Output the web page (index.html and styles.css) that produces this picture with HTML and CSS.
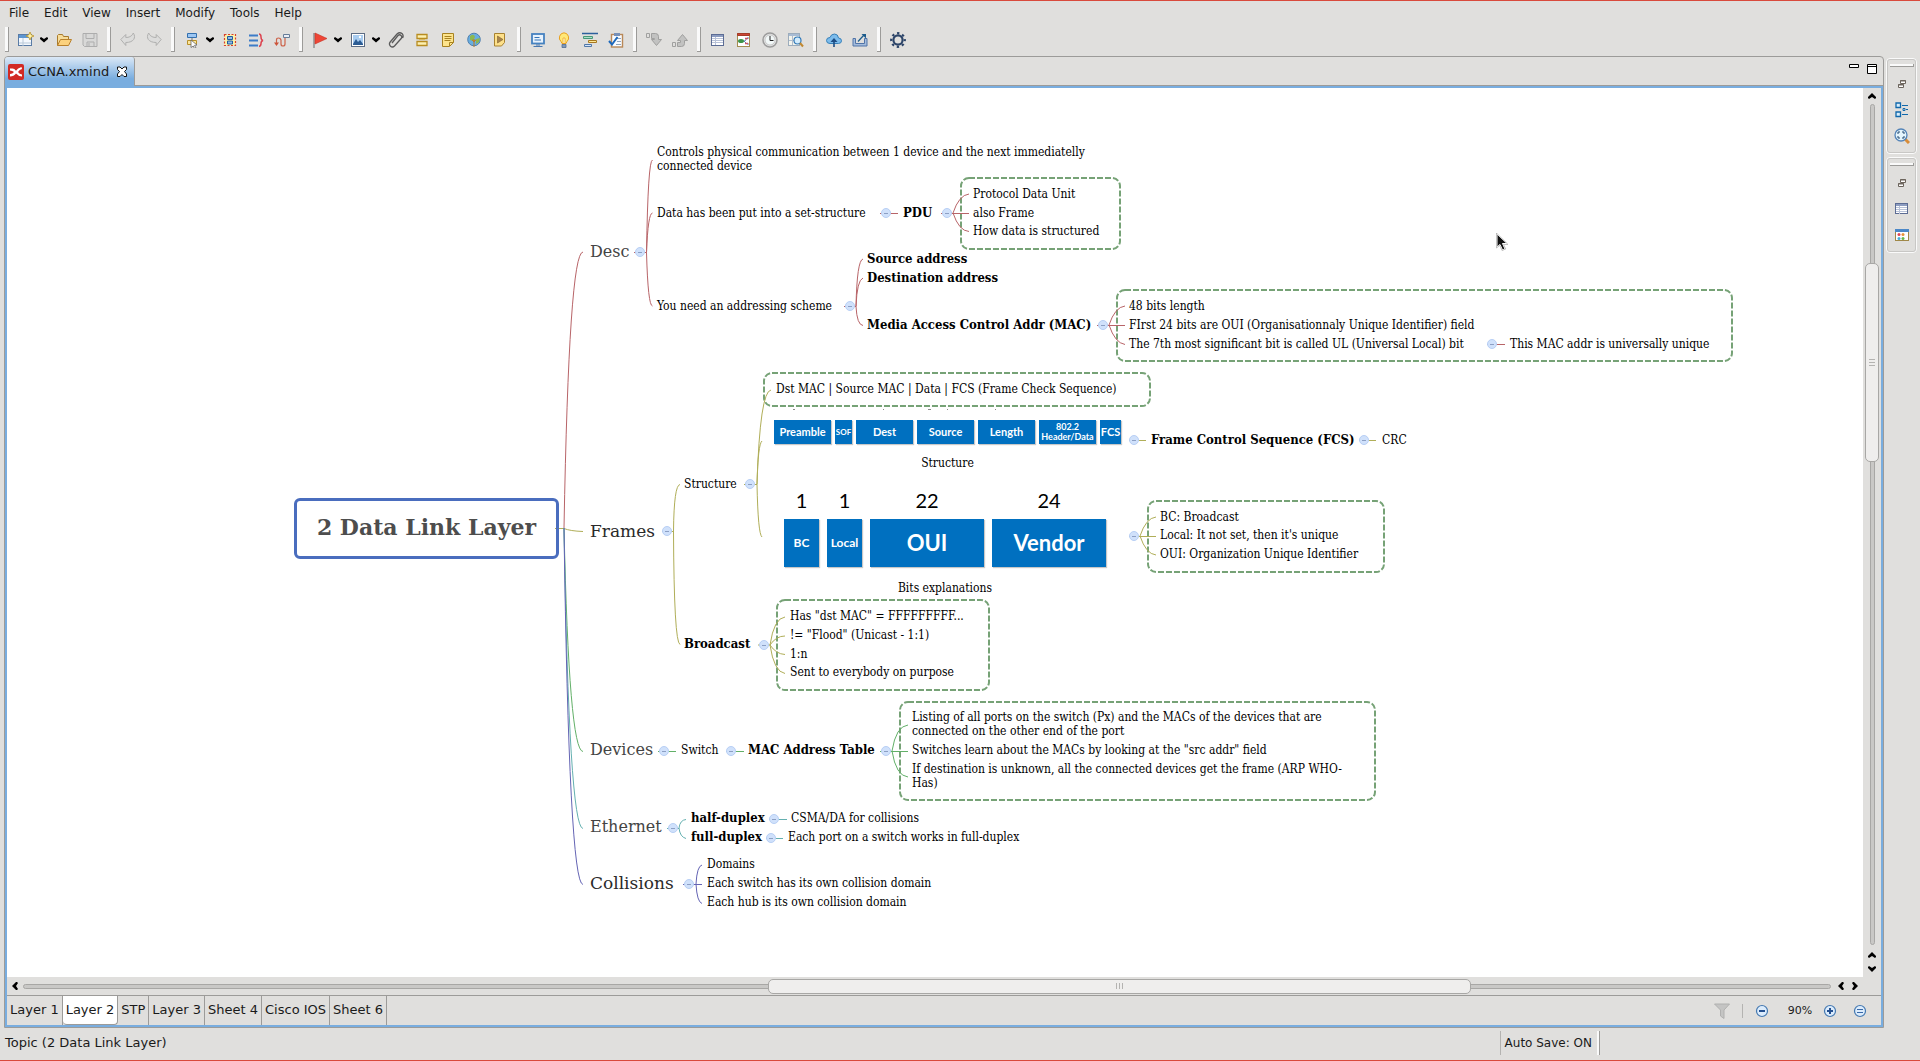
FILE: index.html
```html
<!DOCTYPE html>
<html lang="en">
<head>
<meta charset="utf-8">
<title>CCNA.xmind</title>
<link rel="stylesheet" href="styles.css">
</head>
<body>
<nav class="menubar" aria-label="Main menu">
  <button>File</button><button>Edit</button><button>View</button><button>Insert</button><button>Modify</button><button>Tools</button><button>Help</button>
</nav>

<div class="toolbar" role="toolbar" aria-label="Main toolbar">
  <i class="sep"></i>
  <button aria-label="New"><svg viewBox="0 0 16 16"><rect x=".5" y="2.500" width="13" height="11" fill="#f4f8fd" stroke="#5a7ca6"/><path d="M1 3h12v3H1z" fill="#5d96d2"/><path d="M5 6v8M1 11h12" stroke="#b8c8d8"/><path d="M12 0l1.200 2.800L16 4l-2.800 1.200L12 8l-1.200-2.800L8 4l2.800-1.200z" fill="#fff3a8" stroke="#b8902a" stroke-width=".8"/></svg></button>
  <button class="drop" aria-label="New options"><svg viewBox="0 0 8 6"><path d="M0 1l1-1 3 2 3-2 1 1v1L4 5.500 0 2z"/></svg></button>
  <button aria-label="Open"><svg viewBox="0 0 16 16"><path d="M1.500 13.500v-10l1-1h4l1 2h5v3" fill="#f7dc9a" stroke="#a87b2c"/><path d="M1.500 13.500l3-6h11l-3 6z" fill="#fbd17d" stroke="#b8802c"/></svg></button>
  <button aria-label="Save"><svg viewBox="0 0 16 16" fill="#d8d8d7" stroke="#adadad"><path d="M1 1.500h14v13H2.500L1 13z"/><path d="M4 1.500h8v5H4zM5 10h7v4.500H5zM7 11v3.500"/></svg></button>
  <i class="sep"></i>
  <button aria-label="Undo"><svg viewBox="0 0 16 16"><path d="M.8 7.500l5-5v3c3 0 6-1 7.500-4.500 3 4.500.5 9.500-7.500 9.500v3z" fill="#dcdcdb" stroke="#b0b0af"/></svg></button>
  <button aria-label="Redo"><svg viewBox="0 0 16 16"><path d="M15.200 7.500l-5-5v3c-3 0-6-1-7.500-4.500-3 4.500-.5 9.500 7.500 9.500v3z" fill="#dcdcdb" stroke="#b0b0af"/></svg></button>
  <i class="sep"></i>
  <button aria-label="Topic"><svg viewBox="0 0 16 16"><path d="M3.500 1.500h9v4h-9z" fill="#9cc6f2" stroke="#3470ae"/><path d="M8 6v2" stroke="#777"/><path d="M3.500 8.500h9v4h-9z" fill="#fbe59a" stroke="#b8902a"/><path d="M7 8l6 5-2.500.3L12 16l-1.500.5L9.300 14 7 15.500z" fill="#fff" stroke="#666" stroke-width=".8"/></svg></button>
  <button class="drop" aria-label="Topic options"><svg viewBox="0 0 8 6"><path d="M0 1l1-1 3 2 3-2 1 1v1L4 5.500 0 2z"/></svg></button>
  <button aria-label="Boundary"><svg viewBox="0 0 16 16"><rect x="2.500" y="2.500" width="11" height="11" fill="#fff2a8" stroke="#d8402c" stroke-dasharray="2 1.500" stroke-width="1.200"/><path d="M5.500 4.500h5v3h-5zM5.500 9h5v3h-5z" fill="#8cb8e8" stroke="#205c9c"/></svg></button>
  <button aria-label="Summary"><svg viewBox="0 0 16 16" fill="none"><path d="M1 3.500h9M1 8.500h9M1 13.500h9" stroke="#3c7cc8" stroke-width="2"/><path d="M11 2q2 0 2 3t2 3.500q-2 .5-2 3t-2 3" stroke="#dc4450" stroke-width="1.500"/></svg></button>
  <button aria-label="Relationship"><svg viewBox="0 0 16 16" fill="none"><path d="M2.500 12V8q0-2 2-2t2.500 2v4q0 2 2 2t2-2V5" stroke="#cc6248" stroke-width="1.200"/><path d="M0 10.500h5L2.500 14z" fill="#cc5238"/><path d="M9.500 2.500h6v3h-6z" stroke="#667c98" fill="#e8eef6"/></svg></button>
  <i class="sep"></i>
  <button aria-label="Marker"><svg viewBox="0 0 16 16"><path d="M2 1v15" stroke="#909090" stroke-width="1.500"/><path d="M3 1l12 5.500L3 12z" fill="#ee4636" stroke="#c83024" stroke-width=".6"/></svg></button>
  <button class="drop" aria-label="Marker options"><svg viewBox="0 0 8 6"><path d="M0 1l1-1 3 2 3-2 1 1v1L4 5.500 0 2z"/></svg></button>
  <button aria-label="Image"><svg viewBox="0 0 16 16"><rect x="1.500" y="1.500" width="13" height="13" fill="#fff" stroke="#5c6c84"/><path d="M3 3h10v10H3z" fill="#a8ccf0"/><path d="M3 12l3-5 2 3 2-2 3 4v1H3z" fill="#2c5c94"/><circle cx="10" cy="5" r="1.200" fill="#fff"/></svg></button>
  <button class="drop" aria-label="Image options"><svg viewBox="0 0 8 6"><path d="M0 1l1-1 3 2 3-2 1 1v1L4 5.500 0 2z"/></svg></button>
  <button aria-label="Attachment"><svg viewBox="0 0 16 16" fill="none"><path d="M4 11l6-7.500q1.500-1.500 3 0t.2 3L6.500 14q-2 2-4 .2t-.3-4.200L9 2q2.500-2.300 5-.5 2 2 .5 4.500" stroke="#5a5a5a" stroke-width="1.300"/></svg></button>
  <button aria-label="Label"><svg viewBox="0 0 16 16"><path d="M3 2.500h10v4H3zM3 9.500h10v4H3z" fill="#fdf0b0" stroke="#b88c20" stroke-width="1.300"/><path d="M5 7.500h6" stroke="#d8b860"/></svg></button>
  <button aria-label="Notes"><svg viewBox="0 0 16 16"><path d="M2.500 1.500h11v9l-4 4h-7z" fill="#fde48c" stroke="#a88220"/><path d="M4.500 4.500h7M4.500 6.500h7M4.500 8.500h6M9.500 14v-3.500h4" stroke="#a88220" fill="none"/></svg></button>
  <button aria-label="Hyperlink"><svg viewBox="0 0 16 16"><circle cx="8" cy="7.500" r="6.300" fill="#68aee0" stroke="#5080b0"/><path d="M4 4q4-3 5 1L7 9 4 8zM10 7l4-1-1 4-3 2z" fill="#8cb850"/><path d="M8 15V10l-1.500-2h3L8 10" stroke="#b87828" fill="#e8a030"/></svg></button>
  <button aria-label="Audio notes"><svg viewBox="0 0 16 16"><path d="M2.500 1.500h10v9l-3 3.500h-7z" fill="#fde08a" stroke="#a88230"/><path d="M5.500 4v7l5.500-3.500z" fill="#a8844c" stroke="#806030" stroke-width=".6"/></svg></button>
  <i class="sep"></i>
  <button aria-label="Presentation"><svg viewBox="0 0 16 16"><rect x="2" y="2" width="12" height="9.500" fill="#e8f2fc" stroke="#4682c0" stroke-width="1.800"/><path d="M4.500 5.500h5M4.500 8h6.500" stroke="#3474b8"/><path d="M6 13h4M3.500 14.500h9" stroke="#4878b0"/></svg></button>
  <button aria-label="Brainstorming"><svg viewBox="0 0 16 16"><path d="M8 .8a5 5 0 0 1 3 8.700L10 11.500H6L5 9.500A5 5 0 0 1 8 .8z" fill="#ffe878" stroke="#e8a020"/><path d="M7 11V6h2v5" stroke="#f0a828" fill="#fffbe0" stroke-width=".8"/><path d="M6 12.500h4v3H6z" fill="#8098b8" stroke="#506c90" stroke-width=".8"/></svg></button>
  <button aria-label="Gantt"><svg viewBox="0 0 16 16"><path d="M0 1.500h16" stroke="#2c609c" stroke-width="1.500"/><path d="M1.500 4.500h9v2h-9z" fill="#a8e0c8" stroke="#489878"/><path d="M6.500 8.500h8v2h-8z" fill="#fce898" stroke="#a87820"/><path d="M2.500 12.500h7v2h-7z" fill="#d4e4fc" stroke="#5078a8"/></svg></button>
  <button aria-label="Task info"><svg viewBox="0 0 16 16"><rect x="3.500" y="2.500" width="11" height="12.500" fill="#f8fbff" stroke="#b88858" stroke-width="1.400"/><path d="M6 1h6v3H6z" fill="#7890b8"/><path d="M9 6.500h4M9 9.500h4M8 12.500h5" stroke="#90a4bc"/><path d="M1 9l3 3.500L9.500 5" fill="none" stroke="#1c68bc" stroke-width="2"/></svg></button>
  <i class="sep"></i>
  <button aria-label="Drill down"><svg viewBox="0 0 16 16" fill="#c2c2c1" stroke="#a0a09f"><path d="M.5 1.500h3v4h-3z" fill="none"/><path d="M5.500 1.500h4q3 0 3 3v3h3l-5 6-5-6h3V6.500h-3z"/></svg></button>
  <button aria-label="Drill up"><svg viewBox="0 0 16 16" fill="#c2c2c1" stroke="#a0a09f"><path d="M.5 10.500h3v4h-3z" fill="none"/><path d="M5.500 14.500h4q3 0 3-3v-3h3l-5-6-5 6h3v2h-3z"/></svg></button>
  <i class="sep"></i>
  <button aria-label="Properties"><svg viewBox="0 0 16 16"><rect x="1.500" y="2.500" width="12" height="11" fill="#fff" stroke="#5c6c94"/><path d="M2 3h11v2H2z" fill="#8c9cc0"/><path d="M2 6.500h11M2 8.500h11M2 10.500h11M5.500 5v8" stroke="#b8c2d8"/></svg></button>
  <button aria-label="Map theme"><svg viewBox="0 0 16 16"><rect x="1.500" y="1.500" width="12" height="13" fill="#fff" stroke="#a48c50"/><path d="M1.500 1.500h12v2h-12z" fill="#cc4434" stroke="#a43c28"/><path d="M6 9h3l2-3h2M8 9l3 3h2" stroke="#607cb8" fill="none"/><path d="M9 6.500h3M9 11.500h3" stroke="#cc5864" stroke-width="1.500"/><ellipse cx="5" cy="9" rx="3" ry="2" fill="#3c9448"/></svg></button>
  <button aria-label="Revisions"><svg viewBox="0 0 16 16"><circle cx="8" cy="8" r="7" fill="#e4e4e4" stroke="#9c9c9c" stroke-width="1.500"/><circle cx="8" cy="8" r="5" fill="#f2f8f8" stroke="#b8b8b8" stroke-width=".7"/><path d="M8 4v4.500h3.500" stroke="#222" fill="none"/></svg></button>
  <button aria-label="Search"><svg viewBox="0 0 16 16"><rect x=".5" y="1.500" width="11" height="12" fill="#f4f4ec" stroke="#9cacbc"/><path d="M1 2h10v2H1z" fill="#a8bcd4"/><path d="M4.500 4v9M1 8.500h7" stroke="#b0bccc"/><circle cx="9.500" cy="8.500" r="3.500" fill="#d4ecfc" stroke="#3078b8" stroke-width="1.200"/><path d="M12 11l3 3.500" stroke="#c08830" stroke-width="2"/></svg></button>
  <i class="sep"></i>
  <button aria-label="Upload"><svg viewBox="0 0 16 16"><path d="M4 11.500Q.5 11.500.5 8.500T4 5.500Q5 2 8.500 2t4 4q3 .2 3 2.800t-3 2.700z" fill="#7cbcec" stroke="#3880b8"/><path d="M8 15V9" stroke="#1c4c84" stroke-width="1.600"/><path d="M4.500 10L8 6l3.500 4z" fill="#1c4c84"/></svg></button>
  <button aria-label="Share"><svg viewBox="0 0 16 16"><path d="M1 6.500v7.500h14V6.500h-2.500v5h-9v-5z" fill="#a4bcdc" stroke="#5074a8"/><path d="M6 9.500L12 3" stroke="#1c5c8c" stroke-width="1.200"/><path d="M9.500 2H14v4.500z" fill="#1c5c8c"/></svg></button>
  <i class="sep"></i>
  <button aria-label="Preferences"><svg viewBox="0 0 16 16" fill="none" stroke="#2c4468"><circle cx="8" cy="8" r="4.600" stroke-width="2.200"/><circle cx="8" cy="8" r="6.800" stroke-width="2.200" stroke-dasharray="2.400 2.940" stroke-dashoffset="1.200"/></svg></button>
</div>

<div class="workbench">
  <main class="editor">
    <header class="editor-tabs">
      <div class="editor-tab">
        <svg viewBox="0 0 16 16" width="16" height="16"><rect width="16" height="16" rx="2" fill="#d22a24"/><path d="M2 4.500h2.500q2 0 3.500 2.300Q9.500 4 13.500 3l.5 2q-2.500.5-4 3 1.500 2 4 2.500v2q-4-.5-6-3-2 3-6 3v-2.500q2.500 0 4-2Q4.500 6.500 2 6.500z" fill="#fff"/></svg>
        <span>CCNA.xmind</span>
        <button class="close" aria-label="Close tab"><svg viewBox="0 0 12 12" width="12" height="12"><path d="M1.500 1h2.500l2 2 2-2h2.500v2.500L8.500 5.500l2 2.500v2.500H8l-2-2-2 2H1.500V8l2-2.500-2-2z" fill="#fff" stroke="#111"/></svg></button>
      </div>
      <div class="window-buttons">
        <button aria-label="Minimize"><svg viewBox="0 0 10 10" width="10" height="10"><path d="M.5.500h9v3h-9z" fill="#fff" stroke="#000"/></svg></button>
        <button aria-label="Maximize"><svg viewBox="0 0 10 10" width="10" height="10"><path d="M.5.500h9v9h-9zM0 2.500h10" fill="#fff" stroke="#000"/></svg></button>
      </div>
    </header>

    <div class="sheet">
      <section class="canvas" aria-label="Mind map">
        <svg class="links" aria-hidden="true">
          <g transform="translate(-7 -88)">
            <g class="boundary">
              <rect x="961" y="178" width="159" height="71" rx="8"/>
              <rect x="1117" y="290" width="615" height="71" rx="8"/>
              <rect x="764" y="373" width="386" height="33" rx="8"/>
              <rect x="1148" y="501" width="236" height="71" rx="8"/>
              <rect x="777" y="600" width="212" height="90" rx="8"/>
              <rect x="900" y="702" width="475" height="98" rx="8"/>
            </g>
            <g class="c-desc">
              <path d="M564 528Q569 252 583 252M634 252.500H646.500M646.500 252.500Q648 160 652.500 160M646.500 252.500Q648 213 652.500 213M646.500 252.500Q648 306 652.500 306"/>
              <path d="M880 213.500H898M941 213.500H969M953 213Q959 195 969 194M953 213Q959 231 969 231.500"/>
              <path d="M844 306.500H856M856 306.500Q857 260 863 259M856 306.500Q857 280 863 278M856 306.500Q857 325 863 325.500"/>
              <path d="M1097 325.500H1125M1109 325Q1115 307 1125 306M1109 325Q1115 343 1125 344.500M1487 344.500H1505"/>
            </g>
            <g class="c-frames">
              <path d="M555 528.500H564Q570 531 583 531.500M662 531.500H673.500M673.500 531Q674 485 680 484.500M673.500 531Q674 642 680 644.500"/>
              <path d="M744 484.500H757M757 484Q760 391 771 390M757 484Q758 444 762 441M757 484Q758 534 762 537"/>
              <path d="M1129 440.500H1146M1359 440.500H1376M1129 536.500H1156M1140 536Q1146 518 1156 517M1140 536Q1146 554 1156 555"/>
              <path d="M758 645H770M770 645Q774 618 785 617M770 645Q776 636 785 636M770 645Q776 654 785 654.500M770 645Q774 672 785 673.500"/>
            </g>
            <path class="specks" d="M793 409.500h2M883 409.500h1M928 409.500h3M947 409.500h1M995 409.500h1"/>
            <g class="c-devices">
              <path d="M564 528Q569 751 583 751.500M658 751.500H676M726 751.500H744M880 751.500H908M892 751Q896 726 908 725M892 751Q896 776 908 777"/>
            </g>
            <g class="c-ethernet">
              <path d="M564 528Q569 828 583 828.500M667 828.500H679M679 828Q680 820 686 819.500M679 828Q680 837 686 838.500M769 819.500H787M766 838.500H783"/>
            </g>
            <g class="c-collisions">
              <path d="M564 528Q569 884 583 884.500M683 884.500H702M696 884Q697 866 702 865M696 884Q697 902 702 903.500"/>
            </g>
          </g>
        </svg>

        <h1 class="central" style="left:287px;top:410px">2 Data Link Layer</h1>

        <div class="topic main" style="left:583px;top:154px">Desc</div>
        <div class="topic main strong" style="left:583px;top:433px">Frames</div>
        <div class="topic main" style="left:583px;top:652px">Devices</div>
        <div class="topic main" style="left:583px;top:729px">Ethernet</div>
        <div class="topic main strong" style="left:583px;top:785px">Collisions</div>

        <div class="topic" style="left:650px;top:57px">Controls physical communication between 1 device and the next immediatelly<br>connected device</div>
        <div class="topic" style="left:650px;top:118px">Data has been put into a set-structure</div>
        <div class="topic bold" style="left:896px;top:118px">PDU</div>
        <div class="topic" style="left:966px;top:99px">Protocol Data Unit</div>
        <div class="topic" style="left:966px;top:118px">also Frame</div>
        <div class="topic" style="left:966px;top:136px">How data is structured</div>
        <div class="topic" style="left:650px;top:211px">You need an addressing scheme</div>
        <div class="topic bold" style="left:860px;top:164px">Source address</div>
        <div class="topic bold" style="left:860px;top:183px">Destination address</div>
        <div class="topic bold" style="left:860px;top:230px">Media Access Control Addr (MAC)</div>
        <div class="topic" style="left:1122px;top:211px">48 bits length</div>
        <div class="topic" style="left:1122px;top:230px">FIrst 24 bits are OUI (Organisationnaly Unique Identifier) field</div>
        <div class="topic" style="left:1122px;top:249px">The 7th most significant bit is called UL (Universal Local) bit</div>
        <div class="topic" style="left:1503px;top:249px">This MAC addr is universally unique</div>

        <div class="topic" style="left:677px;top:389px">Structure</div>
        <div class="topic" style="left:769px;top:294px">Dst MAC | Source MAC | Data | FCS (Frame Check Sequence)</div>
        <figure class="frame-fields" style="left:767px;top:332px">
          <div class="fields"><span>Preamble</span><span class="tiny">SOF</span><span>Dest</span><span>Source</span><span>Length</span><span class="small">802.2<br>Header/Data</span><span>FCS</span></div>
          <figcaption>Structure</figcaption>
        </figure>
        <div class="topic bold" style="left:1144px;top:345px">Frame Control Sequence (FCS)</div>
        <div class="topic" style="left:1375px;top:345px">CRC</div>
        <figure class="mac-bits" style="left:777px;top:398px">
          <div class="counts"><span>1</span><span>1</span><span>22</span><span>24</span></div>
          <div class="fields"><span>BC</span><span>Local</span><span class="large">OUI</span><span class="large">Vendor</span></div>
          <figcaption>Bits explanations</figcaption>
        </figure>
        <div class="topic" style="left:1153px;top:422px">BC: Broadcast</div>
        <div class="topic" style="left:1153px;top:440px">Local: It not set, then it's unique</div>
        <div class="topic" style="left:1153px;top:459px">OUI: Organization Unique Identifier</div>

        <div class="topic bold" style="left:677px;top:549px">Broadcast</div>
        <div class="topic" style="left:783px;top:521px">Has "dst MAC" = FFFFFFFFF...</div>
        <div class="topic" style="left:783px;top:540px">!= "Flood" (Unicast - 1:1)</div>
        <div class="topic" style="left:783px;top:559px">1:n</div>
        <div class="topic" style="left:783px;top:577px">Sent to everybody on purpose</div>

        <div class="topic" style="left:674px;top:655px">Switch</div>
        <div class="topic bold" style="left:741px;top:655px">MAC Address Table</div>
        <div class="topic" style="left:905px;top:622px">Listing of all ports on the switch (Px) and the MACs of the devices that are<br>connected on the other end of the port</div>
        <div class="topic" style="left:905px;top:655px">Switches learn about the MACs by looking at the "src addr" field</div>
        <div class="topic" style="left:905px;top:674px">If destination is unknown, all the connected devices get the frame (ARP WHO-<br>Has)</div>

        <div class="topic bold" style="left:684px;top:723px">half-duplex</div>
        <div class="topic" style="left:784px;top:723px">CSMA/DA for collisions</div>
        <div class="topic bold" style="left:684px;top:742px">full-duplex</div>
        <div class="topic" style="left:781px;top:742px">Each port on a switch works in full-duplex</div>

        <div class="topic" style="left:700px;top:769px">Domains</div>
        <div class="topic" style="left:700px;top:788px">Each switch has its own collision domain</div>
        <div class="topic" style="left:700px;top:807px">Each hub is its own collision domain</div>

        <button class="toggle" style="left:628px;top:159px" aria-label="Collapse Desc"></button>
        <button class="toggle" style="left:874px;top:120px" aria-label="Collapse Data"></button>
        <button class="toggle" style="left:935px;top:120px" aria-label="Collapse PDU"></button>
        <button class="toggle" style="left:838px;top:213px" aria-label="Collapse addressing scheme"></button>
        <button class="toggle" style="left:1091px;top:232px" aria-label="Collapse MAC"></button>
        <button class="toggle" style="left:1480px;top:251px" aria-label="Collapse UL bit"></button>
        <button class="toggle" style="left:655px;top:438px" aria-label="Collapse Frames"></button>
        <button class="toggle" style="left:738px;top:391px" aria-label="Collapse Structure"></button>
        <button class="toggle" style="left:1122px;top:347px" aria-label="Collapse frame fields"></button>
        <button class="toggle" style="left:1352px;top:347px" aria-label="Collapse FCS"></button>
        <button class="toggle" style="left:1122px;top:443px" aria-label="Collapse bits"></button>
        <button class="toggle" style="left:752px;top:552px" aria-label="Collapse Broadcast"></button>
        <button class="toggle" style="left:652px;top:658px" aria-label="Collapse Devices"></button>
        <button class="toggle" style="left:719px;top:658px" aria-label="Collapse Switch"></button>
        <button class="toggle" style="left:874px;top:658px" aria-label="Collapse MAC Address Table"></button>
        <button class="toggle" style="left:661px;top:735px" aria-label="Collapse Ethernet"></button>
        <button class="toggle" style="left:762px;top:726px" aria-label="Collapse half-duplex"></button>
        <button class="toggle" style="left:759px;top:745px" aria-label="Collapse full-duplex"></button>
        <button class="toggle" style="left:677px;top:791px" aria-label="Collapse Collisions"></button>

        <svg class="pointer" viewBox="0 0 12 18" width="12" height="18" aria-hidden="true"><path d="M1 1v13l3-2.500 2.500 5.500 2.500-1-2.500-5.500H11z" fill="#111" stroke="#fff"/><path d="M.5 0v15l3.300-2.700L6 17.500l3.800-1.500L7.500 11.500H12z" fill="none" stroke="#888" stroke-width=".5"/></svg>
      </section>

      <div class="scroll vertical">
        <button aria-label="Scroll up"><svg viewBox="0 0 8 6"><path d="M0 4l4-4 4 4v1L7 6 4 4 1 6 0 5z"/></svg></button>
        <div class="track"><div class="thumb"></div></div>
        <button aria-label="Scroll up"><svg viewBox="0 0 8 6"><path d="M0 4l4-4 4 4v1L7 6 4 4 1 6 0 5z"/></svg></button>
        <button aria-label="Scroll down"><svg viewBox="0 0 8 6"><path d="M0 1l1-1 3 2 3-2 1 1v1L4 6 0 2z"/></svg></button>
      </div>

      <div class="scroll horizontal">
        <button aria-label="Scroll left"><svg viewBox="0 0 6 8"><path d="M4 0L0 4l4 4h1l1-1-2-3 2-3-1-1z"/></svg></button>
        <div class="track"><div class="thumb"></div></div>
        <button aria-label="Scroll left"><svg viewBox="0 0 6 8"><path d="M4 0L0 4l4 4h1l1-1-2-3 2-3-1-1z"/></svg></button>
        <button aria-label="Scroll right"><svg viewBox="0 0 6 8"><path d="M2 0l4 4-4 4H1L0 7l2-3-2-3 1-1z"/></svg></button>
      </div>
    </div>

    <footer class="sheet-bar">
      <div class="sheet-tabs">
        <button>Layer 1</button><button class="active">Layer 2</button><button>STP</button><button>Layer 3</button><button>Sheet 4</button><button>Cisco IOS</button><button>Sheet 6</button>
      </div>
      <div class="zoom">
        <button aria-label="Filter"><svg viewBox="0 0 16 16" width="16" height="16"><path d="M.5 1h15L10 7v8.500L6.500 13V7z" fill="#c4c4c3" stroke="#b0b0af"/></svg></button>
        <i class="thin"></i>
        <button aria-label="Zoom out"><svg viewBox="0 0 14 14" width="14" height="14"><circle cx="7" cy="7" r="5.500" fill="#dcecfc" stroke="#4478b0" stroke-width="1.200"/><path d="M4 7h6" stroke="#245090" stroke-width="2"/></svg></button>
        <button class="level">90%</button>
        <button aria-label="Zoom in"><svg viewBox="0 0 14 14" width="14" height="14"><circle cx="7" cy="7" r="5.500" fill="#dcecfc" stroke="#4478b0" stroke-width="1.200"/><path d="M4 7h6M7 4v6" stroke="#245090" stroke-width="2"/></svg></button>
        <button class="fit" aria-label="Actual size"><svg viewBox="0 0 14 14" width="14" height="14"><circle cx="7" cy="7" r="5.500" fill="#dcecfc" stroke="#4478b0" stroke-width="1.200"/><path d="M4 5.500h6M4 8.500h6" stroke="#3868a8"/></svg></button>
      </div>
    </footer>
  </main>

  <aside class="trim">
    <div class="stack">
      <i class="grip"></i>
      <button aria-label="Restore"><svg viewBox="0 0 8 8" width="8" height="8"><path d="M2.500.500h5v3h-5zM.5 4.500h5v3h-5z" fill="#fff" stroke="#6c645c"/><path d="M2 1h6M0 5h6" stroke="#6c645c"/></svg></button>
      <button aria-label="Outline"><svg viewBox="0 0 14 16" width="14" height="16"><path d="M1 1h4.500v4.500H1zM1 10h4.500v4.500H1z" fill="#d8eefc" stroke="#1068ac" stroke-width="1.300"/><path d="M7 3.500h6M7 12.500h6M11 7.500h2M8 6.500h2v2H8z" stroke="#1068ac" fill="none"/></svg></button>
      <button aria-label="Overview"><svg viewBox="0 0 16 16" width="16" height="16"><path d="M11 11l4 4" stroke="#d88c38" stroke-width="3"/><circle cx="7" cy="7" r="6" fill="#e4f4fc" stroke="#5484b8" stroke-width="1.300"/><path d="M4 6V4h2M8 4h2v2M10 8v2H8M6 10H4V8" stroke="#204870" fill="none"/></svg></button>
    </div>
    <div class="stack">
      <i class="grip"></i>
      <button aria-label="Restore"><svg viewBox="0 0 8 8" width="8" height="8"><path d="M2.500.500h5v3h-5zM.5 4.500h5v3h-5z" fill="#fff" stroke="#6c645c"/><path d="M2 1h6M0 5h6" stroke="#6c645c"/></svg></button>
      <button aria-label="Properties"><svg viewBox="0 0 14 12" width="14" height="12"><rect x=".5" y=".5" width="12" height="10" fill="#fff" stroke="#5c6c94"/><path d="M1 1h11v2H1z" fill="#8c9cc0"/><path d="M1 4.500h11M1 6.500h11M1 8.500h11M4.500 3v8" stroke="#b8c2d8"/></svg></button>
      <button aria-label="Markers"><svg viewBox="0 0 14 12" width="14" height="12"><rect x=".5" y=".5" width="13" height="11" fill="#fff" stroke="#a08848"/><path d="M0 0h14v3H0z" fill="#4c88c8"/><circle cx="4" cy="5.500" r="1.500" fill="#e04458"/><circle cx="8" cy="5.500" r="1.500" fill="#e89438"/><circle cx="4" cy="9.500" r="1.500" fill="#44acd8"/><circle cx="8" cy="9.500" r="1.500" fill="#6cb848"/></svg></button>
    </div>
  </aside>
</div>

<div class="statusbar">
  <span class="message">Topic (2 Data Link Layer)</span>
  <span class="autosave">Auto Save: ON</span>
</div>
</body>
</html>
```
FILE: styles.css
```css
* { box-sizing: border-box; }

body {
  margin: 0;
  min-height: 100vh;
  display: flex;
  flex-direction: column;
  background: #e0dfdd;
  color: #1a1a1a;
  border-top: 1px solid #d94a3c;
  border-bottom: 1px solid #d94a3c;
  font: 13px/16px "DejaVu Sans", sans-serif;
}

button {
  margin: 0;
  padding: 0;
  border: 0;
  background: none;
  font: inherit;
  color: inherit;
  display: flex;
  align-items: center;
  justify-content: center;
}

svg { display: block; flex: none; }

/* Menu and toolbar */
.menubar { display: flex; gap: 15px; padding: 3px 9px; height: 23px; font-size: 12px; }

.toolbar { display: flex; height: 32px; padding: 3px 1px 4px; }
.toolbar button { width: 26px; }
.toolbar button svg { width: 16px; height: 16px; }
.toolbar button.drop { width: 12px; padding-left: 1px; justify-content: flex-start; }
.toolbar .drop svg { width: 8px; height: 6px; }

.sep { width: 12px; display: flex; align-items: center; justify-content: center; }
.sep::before {
  content: "";
  width: 3px;
  height: 24px;
  background: #fafafa;
  border-right: 1px solid #9c9b99;
  border-bottom: 1px solid #9c9b99;
}

/* Editor frame */
.workbench { flex: 1; display: flex; gap: 2px; padding: 0 3px 0 4px; }

.editor {
  flex: 1;
  min-width: 0;
  display: flex;
  flex-direction: column;
  border: 1px solid #9c9b99;
  border-radius: 4px 4px 0 0;
}

.editor-tabs { display: flex; justify-content: space-between; height: 29px; }
.editor-tab {
  display: flex;
  align-items: center;
  gap: 4px;
  padding: 0 6px 0 3px;
  border-right: 1px solid #9c9b99;
  border-radius: 3px 3px 0 0;
  background: linear-gradient(#dbe8f6, #79addf 75%);
}
.close { margin-left: 3px; }
.window-buttons { flex: 1; display: flex; justify-content: flex-end; gap: 8px; padding: 7px 6px 0; border-bottom: 1px solid #9c9b99; }
.window-buttons button { align-self: flex-start; }

.sheet {
  flex: 1;
  display: grid;
  grid-template: 1fr 18px / 1fr 18px;
  border: 2px solid #79addf;
  border-bottom: 0;
}
.canvas { position: relative; overflow: hidden; background: #fff; }

/* Scroll bars */
.scroll { display: flex; align-items: center; }
.scroll button { width: 14px; height: 14px; flex: none; }
.vertical { flex-direction: column; padding: 1px 0; }
.vertical svg { width: 8px; height: 6px; }
.horizontal { padding: 0 1px; }
.horizontal svg { width: 6px; height: 8px; }
.track { position: relative; flex: 1; border: 1px solid #a8a7a5; border-radius: 3px; background: #c9c8c6; }
.vertical .track { width: 5px; margin: 1px 0 3px; }
.horizontal .track { height: 5px; margin: 0 3px 0 1px; }
.thumb { position: absolute; border: 1px solid #a8a7a5; border-radius: 5px; background: #efeeed; display: flex; align-items: center; justify-content: center; }
.thumb::before { content: ""; }
.vertical .thumb { left: -6px; right: -5px; top: 18.8%; height: 23.7%; }
.horizontal .thumb { top: -6px; bottom: -6px; left: 41.2%; width: 38.9%; }
.vertical .thumb::before { width: 6px; height: 7px; background: repeating-linear-gradient(#b4b3b1 0 1px, transparent 1px 3px); }
.horizontal .thumb::before { width: 7px; height: 6px; background: repeating-linear-gradient(90deg, #b4b3b1 0 1px, transparent 1px 3px); }

/* Mind map */
.links { position: absolute; inset: 0; width: 100%; height: 100%; fill: none; stroke-width: 1; }
.boundary { stroke: #76a276; stroke-width: 2; stroke-dasharray: 6 2; }
.c-desc { stroke: #b86468; }
.c-frames { stroke: #b0ae58; }
.c-devices { stroke: #62b068; }
.c-ethernet { stroke: #64b0b0; }
.c-collisions { stroke: #6464b4; }
.specks { stroke: #8a8a8a; }

.central {
  position: absolute;
  margin: 0;
  width: 265px;
  height: 61px;
  border: 3px solid #4a6dbe;
  border-radius: 6px;
  color: #4d4d4d;
  font: bold 22px/53px "DejaVu Serif", serif;
  text-align: center;
}

.topic {
  position: absolute;
  white-space: nowrap;
  color: #000;
  font: 12px/14px "DejaVu Serif Condensed", "DejaVu Serif", serif;
}
.bold { font-weight: bold; font-size: 13px; }
.main { font: 16px/20px "DejaVu Serif", serif; color: #444; }
.main.strong { font-size: 17px; color: #2a2a2a; }

.toggle {
  position: absolute;
  width: 10px;
  height: 10px;
  border: 1px solid #b8cff5;
  border-radius: 5px;
  background: #d0e1fb;
}
.toggle::before { content: ""; width: 4px; height: 1px; background: #8c9fc4; }

figure { position: absolute; margin: 0; }
figcaption { font: 12px/14px "DejaVu Serif Condensed", "DejaVu Serif", serif; color: #000; text-align: center; }
.fields, .counts { display: grid; }
.fields span {
  display: flex;
  align-items: center;
  justify-content: center;
  text-align: center;
  background: #0070c0;
  color: #fff;
  font: bold 12px/12px Lato, sans-serif;
  box-shadow: 1px 1px 1px #c8c8c8;
}
.frame-fields .fields { grid-template-columns: 57px 17px repeat(4, 57px) 21px; gap: 4px; height: 24px; }
.frame-fields .fields span { font-size: 11px; }
.frame-fields .fields .small { font-size: 9px; line-height: 10px; }
.frame-fields .fields .tiny { font-size: 8px; }
.frame-fields figcaption { padding-top: 12px; }
.mac-bits .fields, .mac-bits .counts { grid-template-columns: 35px 35px 114px 114px; gap: 8px; }
.mac-bits .fields { height: 48px; }
.mac-bits .large { font-size: 22px; }
.counts { padding-bottom: 5px; font: 20px/28px Lato, sans-serif; color: #000; text-align: center; }
.mac-bits figcaption { padding-top: 14px; }

.pointer { position: absolute; left: 1489px; top: 145px; }

/* Sheet tabs and zoom */
.sheet-bar {
  display: flex;
  justify-content: space-between;
  height: 32px;
  border: 2px solid #79addf;
  border-top: 0;
}
.sheet-bar > div { border-top: 1px solid #9c9b99; }
.sheet-tabs { display: flex; }
.sheet-tabs button { padding: 0 3px 1px; border-right: 1px solid #9c9b99; }
.sheet-tabs .active { background: #fff; border-bottom: 1px solid #9c9b99; border-radius: 0 0 4px 4px; }
.zoom { flex: 1; display: flex; align-items: center; justify-content: flex-end; padding-right: 14px; }
.thin { width: 1px; height: 14px; margin: 0 12px; background: #b4b3b1; }
.level { width: 54px; padding-left: 8px; font-size: 11px; }
.fit { margin-left: 16px; }

/* Minimised view stacks */
.trim { width: 31px; display: flex; flex-direction: column; gap: 3px; padding-top: 2px; }
.stack {
  display: flex;
  flex-direction: column;
  align-items: center;
  height: 96px;
  border: 1px solid #fafafa;
  outline: 1px solid #c8c7c5;
  outline-offset: -2px;
  border-radius: 4px;
}
.stack button { height: 26px; }
.grip { width: 24px; height: 3px; margin: 5px 0 4px; background: #fafafa; border-right: 1px solid #9c9b99; border-bottom: 1px solid #9c9b99; }

/* Status bar */
.statusbar { display: flex; justify-content: space-between; align-items: center; height: 32px; padding: 0 320px 2px 5px; }
.autosave {
  padding: 4px 7px 4px 4px;
  border-left: 1px solid #b4b3b1;
  border-right: 1px solid #9c9b99;
  box-shadow: inset -2px 0 #fafafa;
  font-size: 12px;
}
```
